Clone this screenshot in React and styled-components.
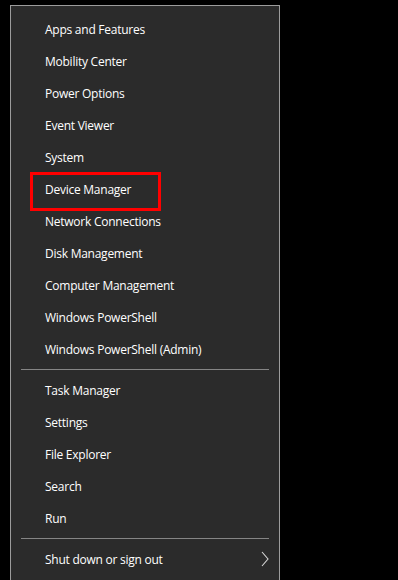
import React from 'react';
import styled, { createGlobalStyle } from 'styled-components';

const GlobalStyle = createGlobalStyle`
  html, body {
    margin: 0;
    padding: 0;
    background: #000;
    height: 580px;
    overflow: hidden;
  }
  body {
    font-family: 'Open Sans', 'Noto Sans', sans-serif;
  }
`;

const Screen = styled.div`
  padding: 5px 0 0 10px;
  height: 575px;
`;

const Menu = styled.div`
  box-sizing: border-box;
  width: 270px;
  height: 575px;
  background: #2b2b2b;
  border: 1px solid #9c9c9c;
  border-bottom: none;
  padding-top: 7px;
  overflow: hidden;
`;

const Group = styled.ul`
  list-style: none;
  margin: 0;
  padding: 0;
`;

const Divider = styled.hr`
  border: none;
  border-top: 1px solid #858585;
  margin: 4px 10px 4px 10px;
`;

const Item = styled.li`
  display: flex;
  align-items: center;
  justify-content: space-between;
  height: 32px;
  padding: 0 10px 0 34px;
  color: #fff;
  font-size: 12px;
  letter-spacing: -0.25px;
`;

const Label = styled.span`
  position: relative;

  &::after {
    content: '';
    display: ${p => (p.$marked ? 'block' : 'none')};
    position: absolute;
    left: -15px;
    top: -9px;
    width: 125px;
    height: 33px;
    border: 3px solid #ff0000;
  }
`;

const Chevron = () => (
  <svg width="8" height="16" viewBox="0 0 8 16" fill="none">
    <path d="M1 1 L7 8 L1 15" stroke="#d8d8d8" strokeWidth="1.1" />
  </svg>
);

const topItems = [
  'Apps and Features',
  'Mobility Center',
  'Power Options',
  'Event Viewer',
  'System',
  'Device Manager',
  'Network Connections',
  'Disk Management',
  'Computer Management',
  'Windows PowerShell',
  'Windows PowerShell (Admin)',
];

const midItems = ['Task Manager', 'Settings', 'File Explorer', 'Search', 'Run'];

export default function App() {
  return (
    <Screen>
      <GlobalStyle />
      <Menu>
        <Group>
          {topItems.map(name => (
            <Item key={name}>
              <Label $marked={name === 'Device Manager'}>{name}</Label>
            </Item>
          ))}
        </Group>
        <Divider />
        <Group>
          {midItems.map(name => (
            <Item key={name}>
              <Label>{name}</Label>
            </Item>
          ))}
        </Group>
        <Divider />
        <Group>
          <Item>
            <Label>Shut down or sign out</Label>
            <Chevron />
          </Item>
        </Group>
      </Menu>
    </Screen>
  );
}
